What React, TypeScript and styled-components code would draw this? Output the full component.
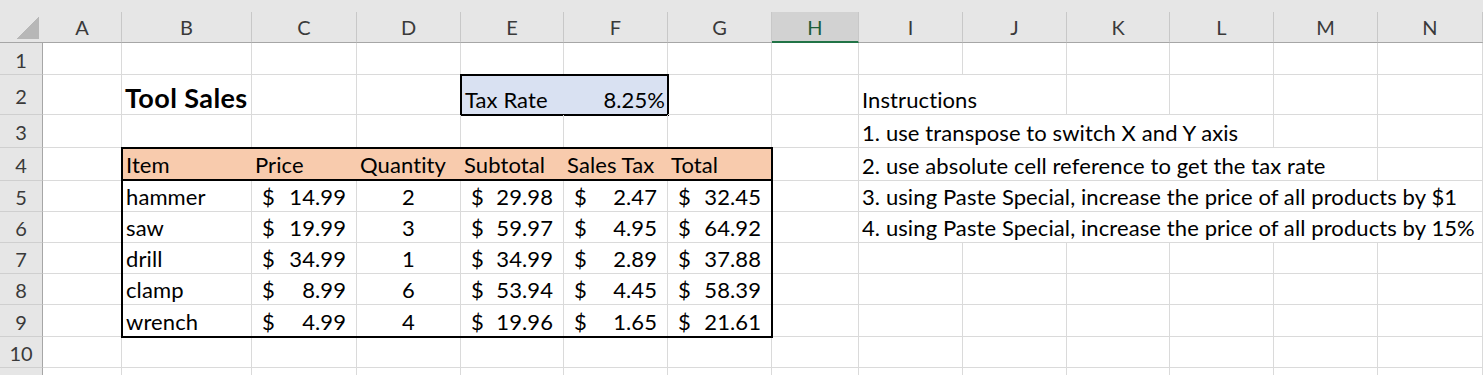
import React from 'react';
import styled, { createGlobalStyle } from 'styled-components';

// 시트 크기
const COLUMNS = ['A', 'B', 'C', 'D', 'E', 'F', 'G', 'H', 'I', 'J', 'K', 'L', 'M', 'N'];
const COL_WIDTHS = [79, 130, 105, 104, 103, 104, 104, 87, 104, 104, 103, 104, 104, 105];
const ROW_HEIGHTS = [32, 40, 33, 33, 31, 31, 31, 31, 32, 31, 31];
const SELECTED_COLUMN = 'H';

interface SaleRow {
  item: string;
  price: string;
  quantity: number;
  subtotal: string;
  tax: string;
  total: string;
}

const sales: SaleRow[] = [
  { item: 'hammer', price: '14.99', quantity: 2, subtotal: '29.98', tax: '2.47', total: '32.45' },
  { item: 'saw', price: '19.99', quantity: 3, subtotal: '59.97', tax: '4.95', total: '64.92' },
  { item: 'drill', price: '34.99', quantity: 1, subtotal: '34.99', tax: '2.89', total: '37.88' },
  { item: 'clamp', price: '8.99', quantity: 6, subtotal: '53.94', tax: '4.45', total: '58.39' },
  { item: 'wrench', price: '4.99', quantity: 4, subtotal: '19.96', tax: '1.65', total: '21.61' },
];

const headings = ['Item', 'Price', 'Quantity', 'Subtotal', 'Sales Tax', 'Total'];

const GlobalStyle = createGlobalStyle`
  html, body {
    margin: 0;
    padding: 0;
    background: #ffffff;
    overflow: hidden;
  }
  body {
    font-family: 'Lato', 'Liberation Sans', sans-serif;
  }
`;

const Sheet = styled.div`
  display: grid;
  grid-template-columns: 43px ${COL_WIDTHS.map((w) => `${w}px`).join(' ')};
  grid-template-rows: 43px ${ROW_HEIGHTS.map((h) => `${h}px`).join(' ')};
  width: 1483px;
  height: 375px;
  overflow: hidden;
  font-size: 22px;
  letter-spacing: 0.1px;
  color: #000;
`;

// 열 머리글
const HeaderSlot = styled.div`
  display: flex;
  padding-top: 12px;
  background: #e6e6e6;
  border-bottom: 1px solid #a6a6a6;
  box-sizing: border-box;
`;

const HeaderLabel = styled.div<{ $selected?: boolean }>`
  flex: 1;
  display: flex;
  align-items: center;
  justify-content: center;
  border-right: 1px solid #c8c8c8;
  background: ${(p) => (p.$selected ? '#d2d2d2' : 'transparent')};
  border-bottom: 2px solid ${(p) => (p.$selected ? '#217346' : 'transparent')};
  margin-bottom: -1px;
  color: ${(p) => (p.$selected ? '#1e5e3a' : '#3a3a3a')};
  font-size: 20px;
  letter-spacing: 0;
`;

const Corner = styled.div`
  width: 23px;
  height: 23px;
  margin: 4px 4px 3px auto;
  align-self: flex-end;
  background: linear-gradient(to bottom right, transparent 50%, #b7b7b7 50%);
`;

const RowHead = styled.div`
  display: flex;
  align-items: center;
  justify-content: center;
  background: #e6e6e6;
  border-right: 1px solid #a6a6a6;
  border-bottom: 1px solid #cfcfcf;
  box-sizing: border-box;
  color: #3a3a3a;
  font-size: 20px;
  letter-spacing: 0;
  padding-top: 2px;
`;

// 일반 셀
const Cell = styled.div<{ $span?: number }>`
  grid-column: span ${(p) => p.$span ?? 1};
  display: flex;
  align-items: flex-end;
  padding: 0 3px 1px;
  border-right: 1px solid #dadada;
  border-bottom: 1px solid #dadada;
  box-sizing: border-box;
  white-space: nowrap;
  min-width: 0;
`;

const Title = styled(Cell)`
  font-weight: 700;
  font-size: 27px;
  letter-spacing: 0.4px;
  padding-bottom: 0;
`;

const TaxBox = styled.div`
  grid-column: span 2;
  display: flex;
  align-items: flex-end;
  justify-content: space-between;
  margin: -1px;
  padding: 0 2px 1px 3px;
  background: #d9e1f2;
  border: 2px solid #000;
  white-space: nowrap;
`;

// 판매 표
const SalesTable = styled.div`
  grid-column: span 6;
  grid-row: span 6;
  display: grid;
  grid-template-columns: subgrid;
  grid-template-rows: subgrid;
  margin: -1px;
  border: 2px solid #000;
  position: relative;
  z-index: 1;
  background: #fff;
`;

const HeadCell = styled.div`
  display: flex;
  align-items: flex-end;
  padding: 0 3px 1px;
  background: #f8cbad;
  border-bottom: 2px solid #000;
  white-space: nowrap;
`;

const DataCell = styled.div<{ $last?: boolean; $bottom?: boolean; $align?: 'left' | 'center' | 'between' }>`
  display: flex;
  align-items: flex-end;
  justify-content: ${(p) =>
    p.$align === 'center' ? 'center' : p.$align === 'between' ? 'space-between' : 'flex-start'};
  padding: ${(p) => (p.$align === 'between' ? '0 10px 1px 10px' : '0 3px 1px')};
  border-right: ${(p) => (p.$last ? 'none' : '1px solid #dadada')};
  border-bottom: ${(p) => (p.$bottom ? 'none' : '1px solid #dadada')};
  white-space: nowrap;
`;

const Money: React.FC<{ value: string; last?: boolean; bottom?: boolean }> = ({ value, last, bottom }) => (
  <DataCell $align="between" $last={last} $bottom={bottom}>
    <span>$</span>
    <span>{value}</span>
  </DataCell>
);

const blanks = (count: number, key: string) =>
  Array.from({ length: count }, (_, i) => <Cell key={`${key}-${i}`} />);

const App: React.FC = () => {
  return (
    <>
      <GlobalStyle />
      <Sheet>
        <HeaderSlot>
          <Corner />
        </HeaderSlot>
        {COLUMNS.map((c) => (
          <HeaderSlot key={c}>
            <HeaderLabel $selected={c === SELECTED_COLUMN}>{c}</HeaderLabel>
          </HeaderSlot>
        ))}

        {/* 1행 */}
        <RowHead>1</RowHead>
        {blanks(14, 'r1')}

        {/* 2행 */}
        <RowHead>2</RowHead>
        <Cell />
        <Title>Tool Sales</Title>
        {blanks(2, 'r2a')}
        <TaxBox>
          <span>Tax Rate</span>
          <span>8.25%</span>
        </TaxBox>
        {blanks(2, 'r2b')}
        <Cell $span={2}>Instructions</Cell>
        {blanks(4, 'r2c')}

        {/* 3행 */}
        <RowHead>3</RowHead>
        {blanks(8, 'r3a')}
        <Cell $span={4}>1. use transpose to switch X and Y axis</Cell>
        {blanks(2, 'r3b')}

        {/* 4행 */}
        <RowHead>4</RowHead>
        <Cell />
        <SalesTable>
          {headings.map((h) => (
            <HeadCell key={h}>{h}</HeadCell>
          ))}
          {sales.map((s, i) => {
            const bottom = i === sales.length - 1;
            return (
              <React.Fragment key={s.item}>
                <DataCell $bottom={bottom}>{s.item}</DataCell>
                <Money value={s.price} bottom={bottom} />
                <DataCell $align="center" $bottom={bottom}>{s.quantity}</DataCell>
                <Money value={s.subtotal} bottom={bottom} />
                <Money value={s.tax} bottom={bottom} />
                <Money value={s.total} bottom={bottom} last />
              </React.Fragment>
            );
          })}
        </SalesTable>
        <Cell />
        <Cell $span={5}>2. use absolute cell reference to get the tax rate</Cell>
        <Cell />

        {/* 5행 */}
        <RowHead>5</RowHead>
        <Cell />
        <Cell />
        <Cell $span={6}>3. using Paste Special, increase the price of all products by $1</Cell>

        {/* 6행 */}
        <RowHead>6</RowHead>
        <Cell />
        <Cell />
        <Cell $span={6}>4. using Paste Special, increase the price of all products by 15%</Cell>

        {[7, 8, 9].map((r) => (
          <React.Fragment key={r}>
            <RowHead>{r}</RowHead>
            <Cell />
            {blanks(7, `r${r}`)}
          </React.Fragment>
        ))}

        {/* 10행, 잘린 11행 */}
        <RowHead>10</RowHead>
        {blanks(14, 'r10')}
        <RowHead />
        {blanks(14, 'r11')}
      </Sheet>
    </>
  );
};

export default App;
